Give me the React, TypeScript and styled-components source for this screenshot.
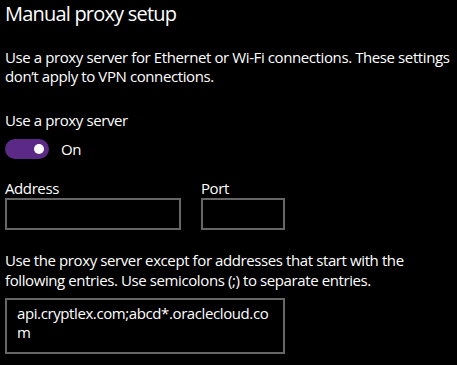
import React from 'react';
import styled, { createGlobalStyle } from 'styled-components';

const GlobalStyle = createGlobalStyle`
  html, body {
    margin: 0;
    padding: 0;
    background: #000;
  }
  body {
    font-family: 'Open Sans', 'Noto Sans', sans-serif;
    color: #fff;
  }
`;

const Page = styled.div`
  width: 457px;
  height: 365px;
  overflow: hidden;
  background: #000;
  padding: 0 0 0 5px;
  box-sizing: border-box;
  display: flex;
  flex-direction: column;
`;

const Title = styled.h1`
  margin: 0;
  font-size: 20px;
  font-weight: 400;
  line-height: 27px;
  letter-spacing: -0.8px;
  white-space: nowrap;
`;

const Paragraph = styled.p<{ $top: number; $lh: number }>`
  margin: ${(p) => p.$top}px 0 0;
  font-size: 15px;
  line-height: ${(p) => p.$lh}px;
  letter-spacing: -0.4px;
  white-space: nowrap;
`;

const Label = styled.div<{ $top?: number }>`
  margin-top: ${(p) => p.$top ?? 0}px;
  font-size: 15px;
  line-height: 19px;
  letter-spacing: -0.4px;
  white-space: nowrap;
`;

const ToggleRow = styled.div`
  display: flex;
  align-items: center;
  gap: 12px;
  margin-top: 9px;
  height: 20px;
`;

const Track = styled.div`
  width: 44px;
  height: 20px;
  border-radius: 10px;
  background: #5b2a86;
  display: flex;
  align-items: center;
  justify-content: flex-end;
  padding-right: 5px;
  box-sizing: border-box;
`;

const Knob = styled.div`
  width: 10px;
  height: 10px;
  border-radius: 50%;
  background: #fff;
`;

const ToggleText = styled.span`
  font-size: 15px;
  letter-spacing: -0.4px;
`;

const FieldRow = styled.div`
  display: flex;
  gap: 20px;
  margin-top: 20px;
`;

const Field = styled.div`
  display: flex;
  flex-direction: column;
`;

const Input = styled.div<{ $w: number }>`
  width: ${(p) => p.$w}px;
  height: 32px;
  border: 2px solid #666;
  box-sizing: border-box;
`;

const TextBox = styled.div`
  width: 280px;
  height: 56px;
  margin-top: 8px;
  border: 2px solid #666;
  box-sizing: border-box;
  padding: 4px 10px 0;
  font-size: 15px;
  line-height: 19px;
  letter-spacing: -0.4px;
  white-space: nowrap;
`;

export default function App() {
  return (
    <>
      <GlobalStyle />
      <Page>
        <Title>Manual proxy setup</Title>
        <Paragraph $top={21} $lh={19}>
          Use a proxy server for Ethernet or Wi-Fi connections. These settings
          <br />
          don’t apply to VPN connections.
        </Paragraph>
        <Label $top={25}>Use a proxy server</Label>
        <ToggleRow>
          <Track>
            <Knob />
          </Track>
          <ToggleText>On</ToggleText>
        </ToggleRow>
        <FieldRow>
          <Field>
            <Label>Address</Label>
            <Input $w={176} />
          </Field>
          <Field>
            <Label>Port</Label>
            <Input $w={84} />
          </Field>
        </FieldRow>
        <Paragraph $top={20} $lh={20}>
          Use the proxy server except for addresses that start with the
          <br />
          following entries. Use semicolons (;) to separate entries.
        </Paragraph>
        <TextBox>
          api.cryptlex.com;abcd*.oraclecloud.co
          <br />m
        </TextBox>
      </Page>
    </>
  );
}
